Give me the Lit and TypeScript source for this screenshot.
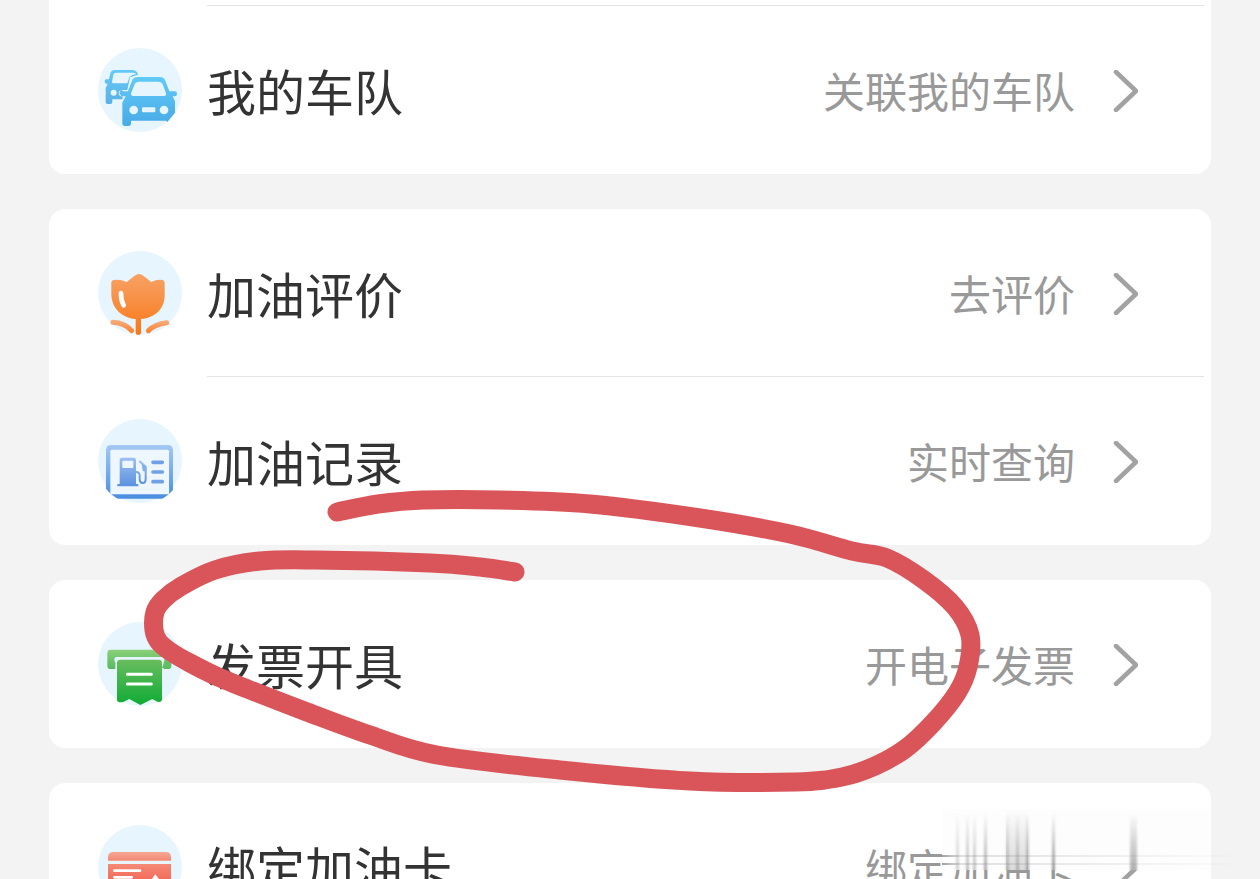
import { LitElement, html, css, svg, type TemplateResult } from "lit";
import { customElement } from "lit/decorators.js";

interface Entry {
  id: string;
  label: string;
  value: string;
  icon: TemplateResult;
}

const gradient = (id: string, from: string, to: string) => svg`
  <linearGradient id=${id} x1="0" y1="0" x2="0" y2="1">
    <stop offset="0" stop-color=${from}></stop>
    <stop offset="1" stop-color=${to}></stop>
  </linearGradient>`;

/* Every icon sits on a pale disc of radius 126; top is the disc's upper edge. */
const badge = (top: number, body: TemplateResult) => html`
  <svg class="icon" viewBox="24 ${top} 252 252" aria-hidden="true">
    <circle cx="150" cy=${top + 126} r="126" fill="#e7f5fe"></circle>
    ${body}
  </svg>`;

const fleetIcon = badge(24, svg`
  <defs>
    ${gradient("carBack", "#64caf8", "#5bb0e6")}
    ${gradient("carFront", "#62caf9", "#48aae6")}
  </defs>
  <path fill="url(#carBack)" fill-rule="evenodd" d="M74 90H126Q141 90 144 104L120 112L112 150H92L88 160L98 172V178H67V186Q67 192 61 192H53Q47 192 47 186V145L53 131H48Q44 130 44 124Q44 118 49 118H57L61 100Q64 90 74 90ZM78 98Q71 98 70 104L66 125Q66 130 70 130H112L118 112Q124 104 138 103Q137 98 130 98ZM71 149A9 9 0 1 0 71 167A9 9 0 1 0 71 149ZM96 150Q86 151 86 159Q86 168 97 170L103 160Z"></path>
  <path fill="url(#carFront)" fill-rule="evenodd" d="M143 111H210Q222 111 226 122L238 154H254Q261 154 261 161Q261 169 253 169H248L255 184V218L232 246L228 242H123V250Q123 258 115 258H105Q97 258 97 250V188L107 169H99Q91 168 91 161Q91 154 98 154H114L126 122Q130 111 143 111ZM147 125Q137 125 134 133L123 160Q121 168 130 168H222Q230 168 228 160L218 133Q215 125 206 125ZM131 197A13 13 0 1 0 131 223A13 13 0 1 0 131 197ZM222 197A13 13 0 1 0 222 223A13 13 0 1 0 222 197ZM159 202Q156 202 156 205V214Q156 217 159 217H193Q196 217 196 214V205Q196 202 193 202Z"></path>`);

const tulipIcon = badge(18, svg`
  <defs>
    ${gradient("petal", "#f7a266", "#f97716")}
    ${gradient("leaf", "#f8a775", "#f98736")}
  </defs>
  <path fill="url(#petal)" d="M72 105Q91 102 110 111L134 92Q147 82 160 92L184 111Q202 102 218 105Q224 106 224 114V150C224 190 198 218 153 222V262Q153 270 145 270Q137 270 137 262V222C94 218 66 190 64 150V114Q64 106 72 105Z"></path>
  <path d="M93 144Q92 163 101 181" fill="none" stroke="#fff" stroke-width="14" stroke-linecap="round"></path>
  <path d="M69 232Q105 234 125 257M230 233Q194 237 175 257" fill="none" stroke="url(#leaf)" stroke-width="15" stroke-linecap="round"></path>`);

const recordIcon = badge(21, svg`
  <defs>
    ${gradient("frame", "#a5c8f3", "#4a8ee0")}
    ${gradient("pump", "#9dbff0", "#5a91df")}
    <clipPath id="disc"><circle cx="150" cy="147" r="132"></circle></clipPath>
  </defs>
  <g clip-path="url(#disc)">
    <path fill="url(#frame)" d="M64 99H233Q249 99 249 115V260H48V115Q48 99 64 99Z"></path>
    <path d="M66 113H232Q237 113 237 118V247H61V118Q61 113 66 113Z" fill="#eef7ff"></path>
  </g>
  <path fill="url(#pump)" fill-rule="evenodd" d="M96 137H130Q138 137 138 145V216H145V223H82V216H89V145Q89 137 96 137ZM100 146Q97 146 97 149V165Q97 168 100 168H127Q130 168 130 165V149Q130 146 127 146Z"></path>
  <path d="M138 180Q150 180 149 193V203Q150 213 158 213Q167 213 167 201V164L148 147" fill="none" stroke="url(#pump)" stroke-width="6"></path>
  <path d="M155 155L169 165V181L158 176Z" fill="#85aee9"></path>
  <path d="M189 151H217M189 180H217M189 209H217" stroke="#70a0e5" stroke-width="11" stroke-linecap="round"></path>`);

const invoiceIcon = badge(30, svg`
  <defs>
    ${gradient("slot", "#8bd07a", "#55bb60")}
    ${gradient("ticket", "#69bd5d", "#0fab35")}
  </defs>
  <path fill="url(#slot)" fill-rule="evenodd" d="M62 113H234Q244 113 244 123V161Q244 171 234 171H62Q52 171 52 161V123Q52 113 62 113ZM80 135Q73 135 73 143Q73 151 80 151H216Q223 151 223 143Q223 135 216 135Z"></path>
  <path d="M76 140H221V176H76Z" fill="#e7f5fe"></path>
  <path d="M223 151H238L230 168H216Z" fill="#5fbe64"></path>
  <path fill="url(#ticket)" d="M91 143H206Q216 143 216 153V263Q213 273 202 269L187 261L151 279L118 261L100 270Q82 274 81 263V153Q81 143 91 143Z"></path>
  <path d="M112 187H184M112 216H184" stroke="#fff" stroke-width="9" stroke-linecap="round"></path>`);

const bindIcon = badge(30, svg`
  <defs>
    ${gradient("bandTop", "#f6a797", "#f38972")}
    ${gradient("bandBody", "#f58a77", "#ef4f3c")}
  </defs>
  <path d="M70 111H227Q243 111 243 127V137H54V127Q54 111 70 111Z" fill="url(#bandTop)"></path>
  <path d="M54 147H243V226Q243 240 229 240H68Q54 240 54 226Z" fill="url(#bandBody)"></path>
  <path d="M73 167H150M73 187H125" stroke="#fff" stroke-width="8" stroke-linecap="round"></path>
  <path d="M196 178L214 202Q214 218 196 218Q178 218 178 202Z" fill="#fff"></path>`);

const groups: Entry[][] = [
  [{ id: "fleet", label: "我的车队", value: "关联我的车队", icon: fleetIcon }],
  [
    { id: "review", label: "加油评价", value: "去评价", icon: tulipIcon },
    { id: "records", label: "加油记录", value: "实时查询", icon: recordIcon },
  ],
  [{ id: "invoice", label: "发票开具", value: "开电子发票", icon: invoiceIcon }],
  [{ id: "bind", label: "绑定加油卡", value: "绑定加油卡", icon: bindIcon }],
];

/* Freehand marker stroke round the invoice entry. */
const markerPoints: [number, number][] = [
  [337, 512], [378, 504], [423, 500], [500, 500], [590, 504], [700, 518],
  [790, 534], [852, 551], [887, 558], [924, 580], [955, 607], [970, 635],
  [968, 667], [957, 693], [933, 723], [905, 749], [875, 766], [842, 777],
  [795, 782], [690, 781], [560, 770], [437, 755], [370, 735], [307, 712],
  [250, 690], [216, 676], [190, 663], [171, 652], [159, 642], [154, 630],
  [155, 612], [163, 600], [180, 587], [215, 570], [260, 561], [315, 560],
  [430, 563], [480, 567], [515, 572],
];

function smooth(points: [number, number][]): string {
  let d = `M${points[0].join(" ")}`;
  for (let i = 0; i < points.length - 1; i++) {
    const a = points[Math.max(i - 1, 0)];
    const b = points[i];
    const c = points[i + 1];
    const e = points[Math.min(i + 2, points.length - 1)];
    d += `C${b[0] + (c[0] - a[0]) / 6} ${b[1] + (c[1] - a[1]) / 6} ${c[0] - (e[0] - b[0]) / 6} ${c[1] - (e[1] - b[1]) / 6} ${c[0]} ${c[1]}`;
  }
  return d;
}

/* Streaks of the smudge: x, width, opacity. */
const streaks: [number, number, number][] = [
  [16, 3, 0.4], [26, 3, 0.55], [33, 3, 0.5], [44, 3, 0.7], [66, 3, 0.5],
  [76, 3, 0.55], [86, 3, 0.7], [112, 3, 0.85], [190, 7, 0.65],
];

@customElement("app-root")
export class AppRoot extends LitElement {
  static styles = css`
    :host {
      display: block;
      position: relative;
      height: 100vh;
      overflow: hidden;
      background: #f3f3f3;
      font-family: "Noto Sans CJK SC", sans-serif;
    }
    .page {
      display: flex;
      flex-direction: column;
      gap: 35px;
      padding: 0 49px;
    }
    .card {
      position: relative;
      margin: 0;
      padding: 0;
      list-style: none;
      background: #fff;
      border-radius: 16px;
    }
    .card.first {
      padding-top: 5px;
      border-radius: 0 0 16px 16px;
    }
    .divider {
      height: 1px;
      margin: 0 7px 0 158px;
      background: #e3e3e3;
    }
    .entry + .entry {
      margin-top: -1px;
    }
    .row {
      display: flex;
      align-items: center;
      gap: 25px;
      height: 168px;
      padding: 0 73px 0 49px;
      color: inherit;
      text-decoration: none;
    }
    .icon {
      flex: none;
      width: 84px;
      height: 84px;
      overflow: visible;
    }
    .label {
      flex: 1;
      font-size: 49px;
      line-height: 72px;
      color: #333;
    }
    .value {
      font-size: 42px;
      line-height: 64px;
      color: #999;
    }
    .chevron {
      flex: none;
      width: 25px;
      height: 42px;
      margin: 2px 0 0 13px;
    }
    .smudge {
      position: absolute;
      top: 22px;
      right: -49px;
      width: 320px;
      height: 66px;
      pointer-events: none;
    }
    .marker {
      position: absolute;
      top: 0;
      left: 0;
      pointer-events: none;
    }
  `;

  private renderEntry(entry: Entry, divided: boolean) {
    return html`
      <li class="entry">
        ${divided ? html`<div class="divider"></div>` : ""}
        <a class="row" href="#${entry.id}">
          ${entry.icon}
          <span class="label">${entry.label}</span>
          <span class="value">${entry.value}</span>
          <svg class="chevron" viewBox="0 0 25 42" aria-hidden="true">
            <path d="M3 2L23 21L3 40" fill="none" stroke="#a2a2a2" stroke-width="4.5" stroke-linecap="round" stroke-linejoin="round"></path>
          </svg>
        </a>
      </li>`;
  }

  private renderSmudge() {
    return html`
      <svg class="smudge" viewBox="0 0 320 66" aria-hidden="true">
        <defs>
          <linearGradient id="fall" x1="0" y1="0" x2="0" y2="1">
            <stop offset="0" stop-color="#888" stop-opacity="0"></stop>
            <stop offset="1" stop-color="#888" stop-opacity="1"></stop>
          </linearGradient>
          <linearGradient id="trail" x1="0" y1="0" x2="1" y2="0">
            <stop offset="0" stop-color="#888" stop-opacity="0.8"></stop>
            <stop offset="0.06" stop-color="#888" stop-opacity="0.25"></stop>
            <stop offset="1" stop-color="#888" stop-opacity="0"></stop>
          </linearGradient>
          <filter id="soft" x="-10%" y="-10%" width="120%" height="120%">
            <feGaussianBlur stdDeviation="1 0"></feGaussianBlur>
          </filter>
        </defs>
        <rect x="2" y="4" width="269" height="61" fill="#fdfdfd"></rect>
        <rect x="66" y="4" width="22" height="61" fill="url(#fall)" opacity="0.3"></rect>
        <g filter="url(#soft)">
          ${streaks.map(([x, w, o]) => svg`<rect x=${x} y="8" width=${w} height="57" fill="url(#fall)" opacity=${o}></rect>`)}
        </g>
        <rect x="2" y="50" width="308" height="2" fill="url(#trail)"></rect>
        <rect x="2" y="58" width="308" height="2" fill="url(#trail)"></rect>
      </svg>`;
  }

  render() {
    return html`
      <main class="page">
        ${groups.map(
          (group, g) => html`
            <ul class="card ${g === 0 ? "first" : ""}">
              ${group.map((entry, i) => this.renderEntry(entry, g === 0 || i > 0))}
              ${g === groups.length - 1 ? this.renderSmudge() : ""}
            </ul>`
        )}
      </main>
      <svg class="marker" width="1260" height="879" viewBox="0 0 1260 879" aria-hidden="true">
        <path d=${smooth(markerPoints)} fill="none" stroke="#da555a" stroke-width="19" stroke-linecap="round" stroke-linejoin="round"></path>
      </svg>`;
  }
}
